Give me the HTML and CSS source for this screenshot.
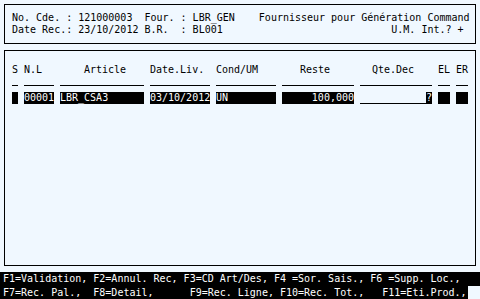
FILE: index.html
```html
<!DOCTYPE html>
<html lang="fr">
<head>
    <meta charset="UTF-8">
    <meta name="viewport" content="width=device-width, initial-scale=1.0">
    <title>Réception commande fournisseur</title>
    <link rel="stylesheet" href="styles.css">
</head>
<body>

<div class="screen">
    <div class="box head">
        <div class="line">No. Cde. : 121000003  Four. : LBR_GEN    Fournisseur pour Génération Command</div>
        <div class="line">Date Rec.: 23/10/2012 B.R.  : BL001                            U.M. Int.? +</div>
    </div>

    <div class="box grid">
        <div class="row titles">
            <span class="c-s">S</span>
            <span class="c-nl">N.L</span>
            <span class="c-art pad4">Article</span>
            <span class="c-date">Date.Liv.</span>
            <span class="c-cond">Cond/UM</span>
            <span class="c-reste pad3">Reste</span>
            <span class="c-qte pad2">Qte.Dec</span>
            <span class="c-el">EL</span>
            <span class="c-er">ER</span>
        </div>
        <div class="row rules">
            <span class="c-s"></span>
            <span class="c-nl"></span>
            <span class="c-art"></span>
            <span class="c-date"></span>
            <span class="c-cond"></span>
            <span class="c-reste"></span>
            <span class="c-qte"></span>
            <span class="c-el"></span>
            <span class="c-er"></span>
        </div>
        <div class="row fields">
            <span class="c-s inv"></span>
            <span class="c-nl inv">00001</span>
            <span class="c-art inv">LBR_CSA3</span>
            <span class="c-date inv">03/10/2012</span>
            <span class="c-cond inv">UN</span>
            <span class="c-reste inv right">100,000</span>
            <span class="c-qte entry"><span class="blank"></span><span class="cursor">?</span></span>
            <span class="c-el inv"></span>
            <span class="c-er inv"></span>
        </div>
    </div>

    <div class="keys">
        <div class="key-line">F1=Validation, F2=Annul. Rec, F3=CD Art/Des, F4 =Sor. Sais., F6 =Supp. Loc.,</div>
        <div class="key-line short">F7=Rec. Pal.,  F8=Detail,      F9=Rec. Ligne, F10=Rec. Tot.,   F11=Eti.Prod.,</div>
    </div>
</div>

</body>
</html>
```

FILE: styles.css
```css
body {
    margin: 0;
    background-color: #f0f8ff;
    color: #000;
    font-family: "DejaVu Sans Mono", monospace;
    font-size: 10px;
    line-height: 12px;
}
.screen {
    height: 299px;
    padding-top: 4px;
    box-sizing: border-box;
    overflow: hidden;
}
.box {
    margin: 0 4px;
    border: 1px solid #000;
}
.head {
    padding: 7px;
}
.line {
    white-space: pre;
    height: 12px;
}
.grid {
    margin-top: 6px;
    height: 216px;
    box-sizing: border-box;
    padding: 13px 7px 0;
}
.row {
    display: flex;
    gap: 6px;
    height: 12px;
}
.row span {
    white-space: pre;
}
.c-s { width: 6px; }
.c-nl { width: 30px; }
.c-art { width: 84px; }
.c-date { width: 60px; }
.c-cond { width: 60px; }
.c-reste { width: 72px; }
.c-qte { width: 72px; }
.c-el, .c-er { width: 12px; }
.pad2 { padding-left: 12px; }
.pad3 { padding-left: 18px; }
.pad4 { padding-left: 24px; }
.titles span {
    box-sizing: border-box;
}
.rules span {
    height: 1px;
    margin-top: 9px;
    background-color: #000;
}
.fields {
    margin-top: 4px;
}
.inv {
    background-color: #000;
    color: #fff;
}
.right {
    text-align: right;
}
.entry {
    display: flex;
}
.blank {
    flex: 1;
    border-bottom: 1px solid #000;
}
.cursor {
    width: 6px;
    background-color: #000;
    color: #fff;
}
.keys {
    margin-top: 6px;
}
.key-line {
    background-color: #000;
    color: #fff;
    white-space: pre;
    padding-left: 3px;
    height: 14px;
    line-height: 13px;
}
.key-line.short {
    width: 465px;
    height: 13px;
}
```
